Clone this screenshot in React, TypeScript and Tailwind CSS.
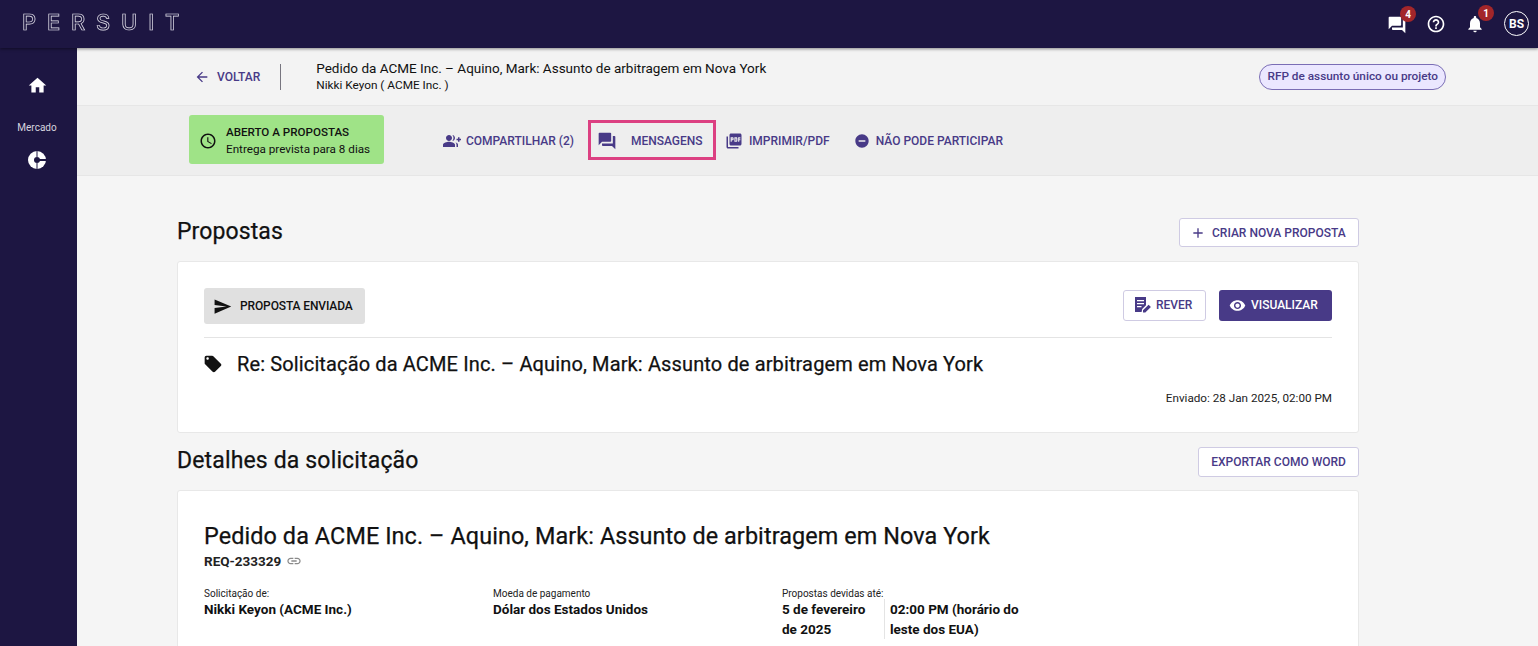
import React from 'react'
import {
  MdAccessTime,
  MdAdd,
  MdArrowBack,
  MdGroupAdd,
  MdHelpOutline,
  MdHome,
  MdLink,
  MdLocalOffer,
  MdNotifications,
  MdPictureAsPdf,
  MdQuestionAnswer,
  MdRemoveCircle,
  MdSend,
  MdVisibility,
} from 'react-icons/md'

const purple = 'text-[#483a87]'

function ChartIcon() {
  return (
    <svg width="18" height="18" viewBox="0 0 18 18">
      <circle cx="9" cy="9" r="9" fill="#fff" />
      <circle cx="9" cy="9" r="3" fill="#1d1642" />
      <path d="M9 8h9v2H9Z" fill="#1d1642" />
      <path d="M8.5 0h1v6h-1Zm0 12h1v6h-1Z" fill="#1d1642" />
    </svg>
  )
}

function ReviewIcon() {
  return (
    <svg width="18" height="18" viewBox="0 0 18 18" fill="#483a87">
      <path d="M1 1h11v8.2L8.2 13 7.6 16H1Z" />
      <path d="M9 16.6v-2.3l5.6-5.6 2.3 2.3-5.6 5.6Z" />
      <path d="M3 4h7v1.3H3Zm0 3h7v1.3H3Zm0 3h4.5v1.3H3Z" fill="#fff" />
    </svg>
  )
}

function Badge({ n }: { n: number }) {
  return (
    <span className="absolute -top-[9px] -right-[9px] flex h-4 w-4 items-center justify-center rounded-full bg-[#a3262a] text-[10px] font-bold text-white">
      {n}
    </span>
  )
}

function TopBar() {
  return (
    <header className="relative z-10 flex h-[48px] shrink-0 items-center justify-between bg-[#1d1642] pl-[22px] pr-[9px] shadow-[0_1px_3px_rgba(0,0,0,0.45)]">
      <span className="mb-[4px] font-['Inter',sans-serif] text-[22px] leading-none font-medium tracking-[10.8px] text-transparent [will-change:transform] [-webkit-text-stroke:0.7px_#e2e0ea]">
        PERSUIT
      </span>
      <div className="flex items-center text-white">
        <span className="relative mr-[19px] mt-[2px]">
          <MdQuestionAnswer size={20} />
          <Badge n={4} />
        </span>
        <MdHelpOutline size={20} className="mr-[19px]" />
        <span className="relative mr-[19px]">
          <MdNotifications size={20} />
          <Badge n={1} />
        </span>
        <span className="-mt-[1px] flex h-[25px] w-[25px] items-center justify-center rounded-full border border-white text-[12px] font-bold">
          BS
        </span>
      </div>
    </header>
  )
}

function Sidebar() {
  return (
    <aside className="flex w-[77px] shrink-0 flex-col items-center bg-[#1d1642] pr-[3px] pt-[27px] text-[#d6d4df]">
      <MdHome size={21} className="text-white" />
      <span className="mt-[25px] text-[10px] leading-[14px]">Mercado</span>
      <span className="mt-[16px]">
        <ChartIcon />
      </span>
    </aside>
  )
}

function ToolLink({ icon, label, className = '' }: { icon: React.ReactNode; label: string; className?: string }) {
  return (
    <span className={`flex items-center pt-[2px] text-[12px] font-medium ${purple} ${className}`}>
      {icon}
      {label}
    </span>
  )
}

function OutlineButton({ children, className = '' }: { children: React.ReactNode; className?: string }) {
  return (
    <button className={`flex items-center rounded-[3px] border border-[#cfcbe3] bg-white text-[12px] font-medium ${purple} ${className}`}>
      {children}
    </button>
  )
}

function Field({ label, value, className = '' }: { label: string; value: string; className?: string }) {
  return (
    <div className={className}>
      <div className="text-[10px] leading-[14px] text-[#222]">{label}</div>
      <div className="-mt-[2px] text-[13.5px] font-bold leading-[20px] text-[#111]">{value}</div>
    </div>
  )
}

export default function App() {
  return (
    <div className="flex h-[646px] w-[1538px] flex-col overflow-hidden bg-[#f5f5f5] font-['Roboto',sans-serif]">
      <TopBar />
      <div className="flex min-h-0 flex-1">
        <Sidebar />
        <main className="min-w-0 flex-1 overflow-hidden">
          <div className="flex h-[58px] items-center border-b border-[#e6e6e6] bg-[#f3f3f3] pl-[117px] pr-[92px]">
            <span className={`flex items-center text-[12px] font-medium ${purple}`}>
              <MdArrowBack size={16} className="mr-[7px]" />
              VOLTAR
            </span>
            <span className="ml-[20px] h-[26px] w-px bg-[#77757f]" />
            <div className="ml-[35px] text-[#111]">
              <div className="text-[13.5px] leading-[18px]">Pedido da ACME Inc. – Aquino, Mark: Assunto de arbitragem em Nova York</div>
              <div className="text-[11.8px] leading-[17px]">Nikki Keyon ( ACME Inc. )</div>
            </div>
            <span className={`ml-auto flex h-[26px] items-center rounded-full border border-[#7a6db5] bg-[#ebe7ff] px-[7px] text-[11.8px] font-medium ${purple}`}>
              RFP de assunto único ou projeto
            </span>
          </div>

          <div className="flex h-[70px] items-center border-b border-[#e6e6e6] bg-[#eeeeee] pb-[2px] pl-[112px]">
            <div className="flex h-[49px] w-[195px] items-center rounded-[3px] bg-[#9fe387] pl-[10px] pt-[2px] text-[#111]">
              <MdAccessTime size={18} />
              <div className="ml-[9px]">
                <div className="text-[11.6px] font-medium leading-[17px]">ABERTO A PROPOSTAS</div>
                <div className="text-[11.7px] leading-[17px]">Entrega prevista para 8 dias</div>
              </div>
            </div>
            <ToolLink className="ml-[59px]" icon={<MdGroupAdd size={18} className="mr-[5px]" />} label="COMPARTILHAR (2)" />
            <ToolLink
              className="ml-[14px] h-[40px] w-[128px] border-[3px] border-[#dc4082] pl-[6px]"
              icon={<MdQuestionAnswer size={20} className="mr-[14px]" />}
              label="MENSAGENS"
            />
            <ToolLink className="ml-[9px]" icon={<MdPictureAsPdf size={18} className="mr-[6px]" />} label="IMPRIMIR/PDF" />
            <ToolLink className="ml-[24px]" icon={<MdRemoveCircle size={16} className="mr-[6px]" />} label="NÃO PODE PARTICIPAR" />
          </div>

          <div className="ml-[100px] w-[1182px]">
            <div className="mt-[42px] flex h-[29px] items-center justify-between">
              <h2 className="text-[23px] tracking-[0.1px] text-[#111] [-webkit-text-stroke:0.25px_#111]">Propostas</h2>
              <OutlineButton className="h-[29px] w-[180px] pl-[10px]">
                <MdAdd size={16} className="mr-[6px]" />
                CRIAR NOVA PROPOSTA
              </OutlineButton>
            </div>

            <section className="mt-[14px] h-[172px] rounded-[3px] border border-[#e8e8e8] bg-white px-[26px] pt-[26px]">
              <div className="flex items-center justify-between border-b border-[#e4e4e4] pb-[13px]">
                <span className="flex h-[36px] w-[161px] items-center rounded-[3px] bg-[#e0e0e0] pl-[9px] text-[12px] font-medium tracking-[-0.12px] text-[#111]">
                  <MdSend size={19} className="mr-[8px]" />
                  PROPOSTA ENVIADA
                </span>
                <div className="flex items-center pb-[2px]">
                  <OutlineButton className="h-[31px] w-[83px] pl-[10px]">
                    <ReviewIcon />
                    <span className="ml-[4px]">REVER</span>
                  </OutlineButton>
                  <button className="ml-[13px] flex h-[31px] w-[113px] items-center rounded-[3px] bg-[#483a87] pl-[10px] text-[12px] font-medium text-white">
                    <MdVisibility size={17} className="mr-[5px]" />
                    VISUALIZAR
                  </button>
                </div>
              </div>
              <div className="mt-[12px] flex items-center text-[#111]">
                <MdLocalOffer size={20} className="-ml-px" />
                <span className="ml-[14px] text-[20px] leading-[28px] tracking-[0.13px] [-webkit-text-stroke:0.25px_#111]">Re: Solicitação da ACME Inc. – Aquino, Mark: Assunto de arbitragem em Nova York</span>
              </div>
              <div className="mt-[12px] text-right text-[11.7px] leading-[16px] text-[#222]">Enviado: 28 Jan 2025, 02:00 PM</div>
            </section>

            <div className="mt-[14px] flex h-[29px] items-center justify-between">
              <h2 className="text-[23px] tracking-[0.15px] text-[#111] [-webkit-text-stroke:0.25px_#111]">Detalhes da solicitação</h2>
              <OutlineButton className="h-[30px] w-[161px] justify-center">EXPORTAR COMO WORD</OutlineButton>
            </div>

            <section className="mt-[14px] h-[200px] rounded-[3px] border border-[#e8e8e8] bg-white px-[26px] pt-[30px]">
              <h1 className="text-[23.4px] leading-[30px] tracking-[0.09px] text-[#111] [-webkit-text-stroke:0.25px_#111]">Pedido da ACME Inc. – Aquino, Mark: Assunto de arbitragem em Nova York</h1>
              <div className="flex items-center text-[13.5px] font-bold leading-[20px] text-[#222]">
                REQ-233329
                <MdLink size={16} className="ml-[5px] text-[#8a8a8a]" />
              </div>
              <div className="mt-[16px] flex">
                <Field className="w-[289px]" label="Solicitação de:" value="Nikki Keyon (ACME Inc.)" />
                <Field className="w-[289px]" label="Moeda de pagamento" value="Dólar dos Estados Unidos" />
                <div>
                  <div className="text-[10px] leading-[14px] text-[#222]">Propostas devidas até:</div>
                  <div className="-mt-[2px] flex text-[13.5px] font-bold leading-[20px] text-[#111]">
                    <div className="w-[103px] border-r border-[#e4e4e4]">5 de fevereiro<br />de 2025</div>
                    <div className="w-[145px] pl-[5px]">02:00 PM (horário do leste dos EUA)</div>
                  </div>
                </div>
              </div>
            </section>
          </div>
        </main>
      </div>
    </div>
  )
}
